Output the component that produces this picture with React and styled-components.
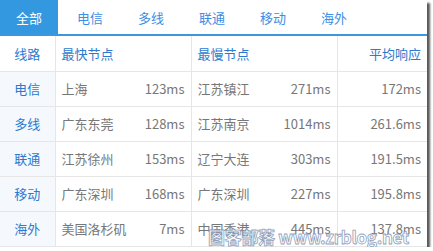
import React, { useState } from 'react'
import styled, { createGlobalStyle } from 'styled-components'

const GlobalStyle = createGlobalStyle`
    body {
        margin: 0;
        background: #fff;
        font-family: "Noto Sans CJK SC", "Noto Sans", sans-serif;
    }
`

const tabs = ['全部', '电信', '多线', '联通', '移动', '海外']

const rows = [
    ['电信', '上海', '123ms', '江苏镇江', '271ms', '172ms'],
    ['多线', '广东东莞', '128ms', '江苏南京', '1014ms', '261.6ms'],
    ['联通', '江苏徐州', '153ms', '辽宁大连', '303ms', '191.5ms'],
    ['移动', '广东深圳', '168ms', '广东深圳', '227ms', '195.8ms'],
    ['海外', '美国洛杉矶', '7ms', '中国香港', '445ms', '137.8ms'],
]

function App() {
    const [active, setActive] = useState(0)

    return (
        <>
            <GlobalStyle />
            <Panel>
                <TabBar>
                    {tabs.map((t, i) => (
                        <Tab key={t} active={i === active} onClick={() => setActive(i)}>
                            {t}
                        </Tab>
                    ))}
                </TabBar>
                <Table>
                    <colgroup>
                        <col style={{ width: 55 }} />
                        <col style={{ width: 136 }} />
                        <col style={{ width: 146 }} />
                        <col style={{ width: 90 }} />
                    </colgroup>
                    <thead>
                        <tr>
                            <Head align="center">线路</Head>
                            <Head>最快节点</Head>
                            <Head>最慢节点</Head>
                            <Head align="right">平均响应</Head>
                        </tr>
                    </thead>
                    <tbody>
                        {rows.map((r) => (
                            <tr key={r[0]}>
                                <LineCell>{r[0]}</LineCell>
                                <Cell>
                                    <Split>
                                        <span>{r[1]}</span>
                                        <span>{r[2]}</span>
                                    </Split>
                                </Cell>
                                <Cell>
                                    <Split>
                                        <span>{r[3]}</span>
                                        <span>{r[4]}</span>
                                    </Split>
                                </Cell>
                                <Cell align="right">{r[5]}</Cell>
                            </tr>
                        ))}
                    </tbody>
                </Table>
                {/* watermark stamped over the screenshot */}
                <Watermark>图客部落 www.zrblog.net</Watermark>
            </Panel>
        </>
    )
}

export default App

const Panel = styled.div`
    position: relative;
    width: 427px;
    height: 247px;
    overflow: hidden;
    background: #fff;
    box-shadow: 3px 3px 2px rgba(0, 0, 0, 0.65);
`

const TabBar = styled.div`
    display: flex;
    gap: 3px;
    height: 34px;
    border-bottom: 2px solid #3b98e0;
`

const Tab = styled.div`
    width: 58px;
    display: flex;
    align-items: center;
    justify-content: center;
    font-size: 13px;
    color: ${(p) => (p.active ? '#fff' : '#3d8ee4')};
    background: ${(p) => (p.active ? '#3498e0' : 'transparent')};
    cursor: pointer;
`

const Table = styled.table`
    width: 427px;
    table-layout: fixed;
    border-collapse: collapse;
    font-size: 13px;

    tr {
        height: 35px;
    }
    td, th {
        border: 1px solid #e6e6e6;
        padding: 0 6px;
    }
    tr td:first-child, tr th:first-child {
        border-left: none;
    }
    tr td:last-child, tr th:last-child {
        border-right: none;
    }
    thead th {
        border-top: none;
    }
`

const Head = styled.th`
    font-weight: normal;
    color: #2b7acf;
    text-align: ${(p) => p.align || 'left'};
`

const LineCell = styled.td`
    text-align: center;
    color: #2b7acf;
    background: #f5f9fd;
`

const Cell = styled.td`
    color: #777;
    text-align: ${(p) => p.align || 'left'};
`

const Split = styled.div`
    display: flex;
    justify-content: space-between;
`

const Watermark = styled.div`
    position: absolute;
    left: 208px;
    top: 224px;
    font-size: 17px;
    font-weight: bold;
    letter-spacing: -0.3px;
    color: #fff;
    -webkit-text-stroke: 0.8px #8797b4;
    opacity: 0.9;
    white-space: nowrap;
`
